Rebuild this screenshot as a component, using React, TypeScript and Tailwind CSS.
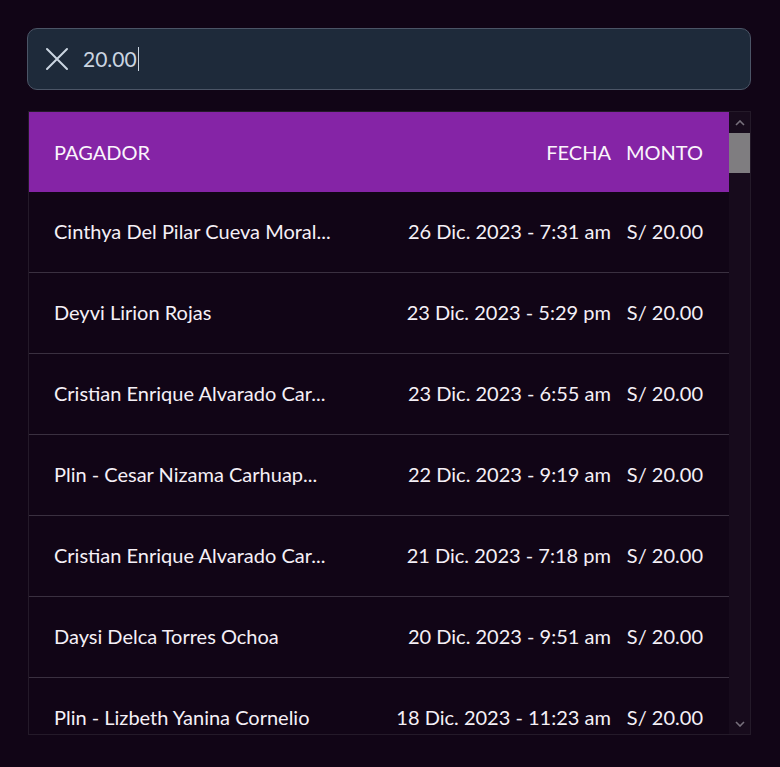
const ROWS = [
  { name: 'Cinthya Del Pilar Cueva Moral...', date: '26 Dic. 2023 - 7:31 am', amount: 'S/ 20.00' },
  { name: 'Deyvi Lirion Rojas', date: '23 Dic. 2023 - 5:29 pm', amount: 'S/ 20.00' },
  { name: 'Cristian Enrique Alvarado Car...', date: '23 Dic. 2023 - 6:55 am', amount: 'S/ 20.00' },
  { name: 'Plin - Cesar Nizama Carhuap...', date: '22 Dic. 2023 - 9:19 am', amount: 'S/ 20.00' },
  { name: 'Cristian Enrique Alvarado Car...', date: '21 Dic. 2023 - 7:18 pm', amount: 'S/ 20.00' },
  { name: 'Daysi Delca Torres Ochoa', date: '20 Dic. 2023 - 9:51 am', amount: 'S/ 20.00' },
  { name: 'Plin - Lizbeth Yanina Cornelio', date: '18 Dic. 2023 - 11:23 am', amount: 'S/ 20.00' },
]

export default function App() {
  return (
    <div
      className="min-h-screen bg-[#110516] pt-[28px] pb-[32px]"
      style={{ fontFamily: "'Lato', 'Open Sans', sans-serif" }}
    >
      {/* Search */}
      <div className="ml-[27px] mr-[29px] h-[62px] flex items-center gap-[13px] px-[16px] rounded-[10px] bg-[#1e2a3a] border border-[#4b5566]">
        <svg width="26" height="26" viewBox="0 0 26 26" fill="none" stroke="#cbd5e1" strokeWidth="2" strokeLinecap="round">
          <path d="M3 3 L23 23 M23 3 L3 23" />
        </svg>
        <span className="text-[21px] text-[#cbd5e1] border-r border-[#cbd5e1] pr-px leading-[24px]">20.00</span>
      </div>

      {/* Table */}
      <div className="ml-[28px] mr-[29px] mt-[21px] h-[624px] flex border border-[#241a29] overflow-hidden">
        <div className="flex-1 flex flex-col overflow-hidden">
          <div className="h-[80px] shrink-0 bg-[#8524a6] grid grid-cols-[1fr_auto_auto] gap-x-[15px] items-center pl-[25px] pr-[26px] pb-px text-[20px] text-[#faf5fc]">
            <span>PAGADOR</span>
            <span className="text-right">FECHA</span>
            <span className="text-right">MONTO</span>
          </div>
          {ROWS.map((r, i) => (
            <div
              key={i}
              className="h-[81px] shrink-0 grid grid-cols-[1fr_auto_auto] gap-x-[16px] items-center pl-[25px] pr-[26px] pb-[2px] text-[20px] text-[#f5f0f6] border-b border-[#3a3040]"
            >
              <span className="truncate">{r.name}</span>
              <span className="text-right whitespace-nowrap">{r.date}</span>
              <span className="text-right whitespace-nowrap">{r.amount}</span>
            </div>
          ))}
        </div>

        {/* Scrollbar */}
        <div className="w-[21px] shrink-0 flex flex-col bg-[#170b1c]">
          <div className="h-[21px] flex items-center justify-center">
            <svg width="10" height="6" viewBox="0 0 10 6" fill="none" stroke="#77707c" strokeWidth="1.6">
              <path d="M1 5 L5 1 L9 5" />
            </svg>
          </div>
          <div className="h-[40px] bg-[#7f7d80]" />
          <div className="flex-1" />
          <div className="h-[21px] flex items-center justify-center">
            <svg width="10" height="6" viewBox="0 0 10 6" fill="none" stroke="#77707c" strokeWidth="1.6">
              <path d="M1 1 L5 5 L9 1" />
            </svg>
          </div>
        </div>
      </div>
    </div>
  )
}
